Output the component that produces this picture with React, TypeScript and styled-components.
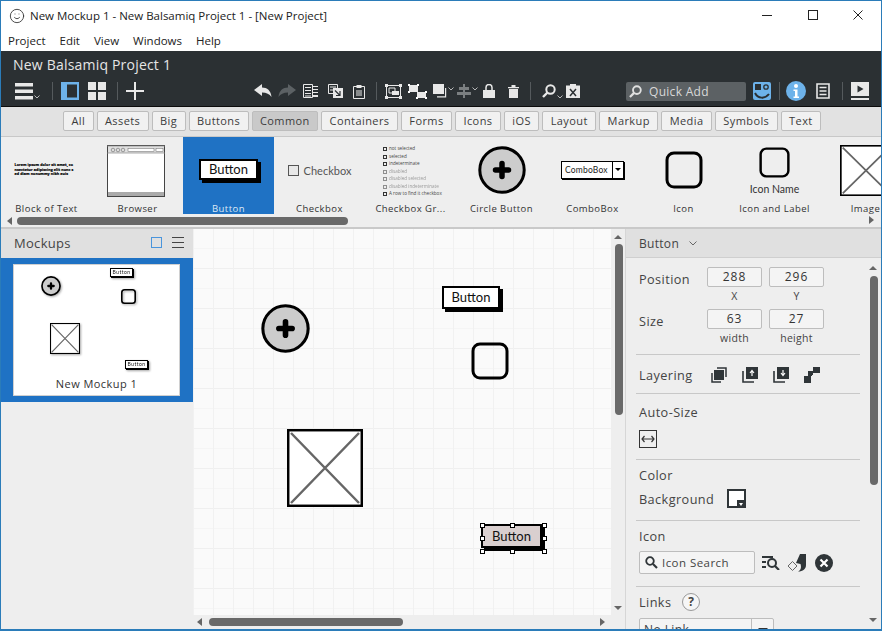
import React from 'react';
import styled, { createGlobalStyle } from 'styled-components';
import { Smile } from 'lucide-react';

const Global = createGlobalStyle`
  html, body { margin: 0; padding: 0; }
  body { font-family: "Open Sans", "Noto Sans", sans-serif; background: #eee; }
  * { box-sizing: border-box; }
`;

const Win = styled.div`
  width: 882px;
  height: 631px;
  border: 1px solid #2b7cb9;
  border-bottom-width: 2px;
  display: flex;
  flex-direction: column;
  overflow: hidden;
  background: #eee;
`;

const TitleBar = styled.div`
  height: 29px;
  flex: none;
  background: #fff;
  display: flex;
  align-items: center;
  padding-left: 8px;
  font-size: 11.5px;
  color: #222;
  gap: 5px;
`;

const WinControls = styled.div`
  margin-left: auto;
  display: flex;
  color: #222;
`;

const WinBtn = styled.div`
  width: 45.5px;
  height: 29px;
  display: flex;
  align-items: center;
  justify-content: center;
  margin-top: -1px;
`;

const MenuBar = styled.div`
  height: 21px;
  flex: none;
  background: #fff;
  display: flex;
  gap: 14px;
  padding-left: 7px;
  font-size: 11.5px;
  color: #222;
  align-items: center;
`;

const Dark = styled.div`
  height: 56px;
  flex: none;
  background: #2b3033;
  color: #e6e6e6;
  border-bottom: 1px solid #0c0c0c;
`;

const ProjectName = styled.div`
  font-size: 14px;
  letter-spacing: 0.2px;
  padding: 4px 0 0 12px;
  height: 25px;
  line-height: 20px;
`;

const Toolbar = styled.div`
  position: relative;
  height: 30px;
  display: flex;
  align-items: center;
`;

const ToolGroup = styled.div<{ $w: number; $gap?: number; $pl?: number }>`
  width: ${p => p.$w}px;
  flex: none;
  display: flex;
  align-items: center;
  gap: ${p => p.$gap ?? 0}px;
  padding-left: ${p => p.$pl ?? 0}px;
  height: 30px;
`;

const Tool = styled.div<{ $ml?: number }>`
  flex: none;
  display: flex;
  align-items: center;
  margin-left: ${p => p.$ml ?? 0}px;
`;

const Sep = styled.div`
  width: 1px;
  height: 18px;
  background: #555a5d;
  flex: none;
`;

const Quick = styled.div`
  width: 120px;
  height: 19px;
  background: #5c6164;
  border-radius: 2px;
  display: flex;
  align-items: center;
  gap: 7px;
  padding-left: 3px;
  font-size: 12px;
  letter-spacing: 0.3px;
  color: #d8d8d8;
  flex: none;
`;

const Filters = styled.div`
  height: 30px;
  flex: none;
  background: #e2e2e2;
  display: flex;
  align-items: center;
  gap: 3px;
  padding: 0 0 1px 62px;
  border-bottom: 1px solid #c8c8c8;
`;

const Filter = styled.div<{ $on?: boolean }>`
  height: 20px;
  padding: 0 7.4px;
  border: 1px solid #bdbdbd;
  border-radius: 2px;
  background: ${p => (p.$on ? '#c9c9c9' : '#f1f1f1')};
  font-size: 11px;
  letter-spacing: 0.42px;
  line-height: 18px;
  color: #3c3c3c;
`;

const Library = styled.div`
  position: relative;
  height: 92px;
  flex: none;
  background: #eee;
  border-bottom: 2px solid #c9c9c9;
  overflow: hidden;
`;

const LibRow = styled.div`
  display: flex;
  height: 77px;
`;

const LibItem = styled.div<{ $on?: boolean }>`
  width: 91px;
  height: 77px;
  flex: none;
  display: flex;
  flex-direction: column;
  align-items: center;
  background: ${p => (p.$on ? '#1f72c4' : 'transparent')};
  color: ${p => (p.$on ? '#dce9f5' : '#333')};
`;

const LibThumb = styled.div`
  height: 66px;
  width: 100%;
  display: flex;
  align-items: center;
  justify-content: center;
`;

const LibLabel = styled.div`
  font-size: 9.5px;
  letter-spacing: 0.45px;
  line-height: 11px;
  white-space: nowrap;
`;

const Nudge = styled.div<{ $mt?: number; $mr?: number; $mb?: number }>`
  margin: ${p => p.$mt ?? 0}px ${p => p.$mr ?? 0}px ${p => p.$mb ?? 0}px 0;
  display: flex;
`;

const HTrack = styled.div`
  height: 14px;
  display: flex;
  align-items: center;
  padding-left: 6px;
`;

const HThumb = styled.div<{ $w: number }>`
  height: 8px;
  width: ${p => p.$w}px;
  border-radius: 4px;
  background: #696969;
  margin-left: 5px;
`;

const ArrowL = styled.div`
  width: 0;
  height: 0;
  border: 4px solid transparent;
  border-left-width: 0;
  border-right: 5px solid #666;
`;

const ArrowR = styled.div<{ $left?: number; $bottom?: number }>`
  position: absolute;
  left: ${p => p.$left ?? 0}px;
  bottom: ${p => p.$bottom ?? 0}px;
  width: 0;
  height: 0;
  border: 4px solid transparent;
  border-right-width: 0;
  border-left: 5px solid #666;
`;

const Main = styled.div`
  flex: 1;
  min-height: 0;
  display: flex;
`;

const Left = styled.div`
  width: 192px;
  flex: none;
  background: #eee;
`;

const PanelHead = styled.div`
  height: 29px;
  background: #e0e0e0;
  display: flex;
  align-items: center;
  font-size: 13px;
  letter-spacing: 0.3px;
  color: #444;
`;

const LeftHead = styled(PanelHead)`
  padding: 0 9px 2px 13px;
  gap: 10px;
`;

const Spacer = styled.div`
  flex: 1;
`;

const BlueBox = styled.div`
  width: 11px;
  height: 11px;
  border: 1px solid #4a95dc;
`;

const Selected = styled.div`
  height: 144px;
  background: #1f72c4;
  padding: 6px 13px 6px 12px;
`;

const Thumb = styled.div`
  position: relative;
  height: 132px;
  background: #fff;
  border: 1px solid #d0d0d0;
  display: flex;
  align-items: flex-end;
  justify-content: center;
  font-size: 11px;
  letter-spacing: 0.45px;
  color: #333;
  padding-bottom: 4px;
`;

const Center = styled.div`
  flex: 1;
  min-width: 0;
  display: flex;
  flex-direction: column;
`;

const CanvasRow = styled.div`
  flex: 1;
  display: flex;
  min-height: 0;
`;

const Canvas = styled.div`
  position: relative;
  flex: 1;
  overflow: hidden;
  background-color: #fafafa;
  background-image:
    linear-gradient(to right, #f1f1f1 1px, transparent 1px),
    linear-gradient(to bottom, #efefef 1px, transparent 1px),
    linear-gradient(to bottom, #f5f5f5 1px, transparent 1px);
  background-size: 20px 20px, 40px 40px, 20px 20px;
  background-position: 0 0, 0 -1px, 0 -1px;
`;

const VTrack = styled.div`
  position: relative;
  width: 14px;
  flex: none;
  background: #eee;
`;

const VThumb = styled.div<{ $top: number; $h: number; $left: number }>`
  position: absolute;
  left: ${p => p.$left}px;
  top: ${p => p.$top}px;
  width: 8px;
  height: ${p => p.$h}px;
  border-radius: 4px;
  background: #696969;
`;

const ArrowU = styled.div<{ $top: number; $left?: number }>`
  position: absolute;
  top: ${p => p.$top}px;
  left: ${p => p.$left ?? 3}px;
  width: 0;
  height: 0;
  border: 4px solid transparent;
  border-top-width: 0;
  border-bottom: 4px solid #666;
`;

const ArrowD = styled.div<{ $top: number; $left?: number }>`
  position: absolute;
  top: ${p => p.$top}px;
  left: ${p => p.$left ?? 3}px;
  width: 0;
  height: 0;
  border: 4px solid transparent;
  border-bottom-width: 0;
  border-top: 4px solid #666;
`;

const CanvasHBar = styled.div`
  position: relative;
  height: 14px;
  flex: none;
  background: #eee;
  display: flex;
  align-items: center;
  padding-left: 4px;
`;

const CanvasHThumb = styled.div`
  width: 194px;
  height: 8px;
  margin-left: 7px;
  background: #696969;
  border-radius: 4px;
`;

const Right = styled.div`
  width: 256px;
  flex: none;
  position: relative;
  background: #eee;
  border-left: 1px solid #d6d6d6;
  overflow: hidden;
`;

const RightHead = styled(PanelHead)`
  padding-left: 13px;
  gap: 10px;
  font-size: 12px;
  border-bottom: 1px solid #cfcfcf;
`;

const Props = styled.div`
  padding: 0 11px 0 10px;
  width: 245px;
  font-size: 12.7px;
  letter-spacing: 0.42px;
  color: #444;
`;

const Section = styled.div<{ $h: number; $pt?: number }>`
  height: ${p => p.$h}px;
  padding: ${p => p.$pt ?? 0}px 0 0 3px;
  border-bottom: 1px solid #c8c8c8;
`;

const LastSection = styled.div`
  padding: 6px 0 0 3px;
`;

const FieldRow = styled.div`
  display: flex;
  align-items: flex-start;
  height: 42px;
`;

const FieldLabel = styled.div`
  width: 68px;
  flex: none;
  line-height: 24px;
`;

const Field = styled.div`
  width: 55px;
  margin-right: 7px;
  text-align: center;
  flex: none;
`;

const NumBox = styled.div`
  height: 20px;
  border: 1px solid #bdbdbd;
  border-radius: 2px;
  background: #f4f4f4;
  font-size: 12px;
  letter-spacing: 1px;
  line-height: 18px;
  color: #333;
`;

const Caption = styled.div`
  font-size: 10.5px;
  line-height: 18px;
  letter-spacing: 0.3px;
`;

const InlineRow = styled.div<{ $gap?: number; $mt?: number }>`
  display: flex;
  align-items: center;
  gap: ${p => p.$gap ?? 0}px;
  margin-top: ${p => p.$mt ?? 0}px;
`;

const Heading = styled.div<{ $w?: number }>`
  line-height: 18px;
  ${p => (p.$w ? `width: ${p.$w}px;` : '')}
`;

const AutoBtn = styled.div`
  width: 18px;
  height: 18px;
  margin-top: 9px;
  border: 1px solid #333;
  display: flex;
  align-items: center;
  justify-content: center;
`;

const Swatch = styled.div`
  position: relative;
  width: 19px;
  height: 19px;
  background: #fff;
  border: 2px solid #2f3538;
`;

const SwatchTab = styled.div`
  position: absolute;
  right: -2px;
  bottom: -2px;
  width: 9px;
  height: 8px;
  background: #2f3538;
  &::after {
    content: '';
    position: absolute;
    left: 2px;
    top: 3px;
    border: 2.5px solid transparent;
    border-bottom-width: 0;
    border-top: 3px solid #fff;
  }
`;

const SearchBox = styled.div`
  width: 116px;
  height: 23px;
  flex: none;
  border: 1px solid #bdbdbd;
  border-radius: 2px;
  background: #f4f4f4;
  display: flex;
  align-items: center;
  gap: 4px;
  padding-left: 5px;
  font-size: 11.5px;
  letter-spacing: 0.45px;
`;

const Help = styled.div`
  width: 18px;
  height: 18px;
  border: 1px solid #999;
  border-radius: 50%;
  background: #f6f6f6;
  font-size: 12px;
  font-weight: 700;
  text-align: center;
  line-height: 16px;
`;

const LinkCombo = styled.div`
  width: 135px;
  height: 24px;
  flex: none;
  border: 1px solid #bdbdbd;
  border-radius: 2px;
  background: #f4f4f4;
  display: flex;
  font-size: 12px;
  padding-left: 4px;
  line-height: 22px;
`;

const ComboArrow = styled.div`
  margin-left: auto;
  width: 22px;
  border-left: 1px solid #bdbdbd;
  position: relative;
  &::after {
    content: '';
    position: absolute;
    left: 6px;
    top: 9px;
    border: 5px solid transparent;
    border-bottom-width: 0;
    border-top: 5px solid #333;
  }
`;

const HideLabel = styled.div`
  margin-left: 51px;
  padding-top: 10px;
`;

const Sketch = styled.div<{ $x: number; $y: number; $w: number; $h: number }>`
  position: absolute;
  left: ${p => p.$x}px;
  top: ${p => p.$y}px;
  width: ${p => p.$w}px;
  height: ${p => p.$h}px;
`;

const MiniSketch = styled(Sketch)`
  filter: drop-shadow(1px 1px 1px rgba(0, 0, 0, 0.35));
`;

const ButtonShape = styled.div<{ $fs: number; $sel?: boolean; $w: number; $h: number; $sh: number; $bw: number }>`
  width: ${p => p.$w}px;
  height: ${p => p.$h}px;
  background: ${p => (p.$sel ? '#d9cfcf' : '#fff')};
  border: ${p => p.$bw}px solid #000;
  box-shadow: ${p => p.$sh}px ${p => p.$sh}px 0 #000;
  font-family: "Lato", "Open Sans", sans-serif;
  font-size: ${p => p.$fs}px;
  color: #111;
  display: flex;
  align-items: center;
  justify-content: center;
  line-height: 1;
`;

const Handle = styled.div<{ $x: number; $y: number }>`
  position: absolute;
  left: ${p => p.$x}px;
  top: ${p => p.$y}px;
  width: 5px;
  height: 5px;
  background: #fff;
  border: 1px solid #000;
`;

const ComboShape = styled.div`
  width: 63px;
  height: 18px;
  border: 1px solid #000;
  box-shadow: 1px 1px 0 #000;
  background: #fff;
  display: flex;
  font-size: 8.5px;
  line-height: 16px;
  font-family: "Lato", sans-serif;
  color: #222;
  padding-left: 3px;
  letter-spacing: 0.2px;
`;

const ComboDrop = styled.div`
  width: 11px;
  margin-left: auto;
  border-left: 1px solid #000;
  position: relative;
  &::after {
    content: '';
    position: absolute;
    left: 2px;
    top: 6px;
    border: 3px solid transparent;
    border-bottom-width: 0;
    border-top: 3px solid #000;
  }
`;

const CheckSq = styled.div`
  width: 11px;
  height: 11px;
  border: 1px solid #555;
  background: #e8e8e8;
`;

const CheckText = styled.div`
  font-size: 11px;
  font-family: "Lato", sans-serif;
  color: #555;
`;

const CheckLine = styled.div`
  display: flex;
  gap: 5px;
  align-items: center;
`;

const IconName = styled.div`
  font-size: 10.5px;
  font-family: "Lato", sans-serif;
  color: #333;
  margin-top: 6px;
  line-height: 10px;
`;

const Stack = styled.div`
  display: flex;
  flex-direction: column;
  align-items: center;
`;

const MiniList = styled.div`
  display: flex;
  flex-direction: column;
  width: 55px;
  font-size: 4.6px;
  line-height: 7.5px;
  color: #444;
  margin-top: 3px;
`;

const MiniRow = styled.div<{ $dim?: boolean }>`
  display: flex;
  align-items: center;
  gap: 2px;
  white-space: nowrap;
  opacity: ${p => (p.$dim ? 0.5 : 1)};
`;

const MiniBox = styled.div`
  width: 4px;
  height: 4px;
  border: 0.5px solid #333;
  flex: none;
`;

const TextBlock = styled.div`
  width: 60px;
  margin-right: 4px;
  font-size: 3.6px;
  font-weight: 700;
  line-height: 4.4px;
  letter-spacing: 0.1px;
  color: #000;
  -webkit-text-stroke: 0.2px #000;
  word-break: break-all;
`;

// sketch drawings

const CircleBtn = ({ size, stroke = 3 }: { size: number; stroke?: number }) => (
  <svg width={size} height={size} viewBox="0 0 48 48">
    <circle cx="24" cy="24" r={24 - stroke / 2 - 0.3} fill="#ccc" stroke="#000" strokeWidth={stroke} />
    <path d="M24 17.500v13M17.500 24h13" stroke="#000" strokeWidth="5.500" strokeLinecap="round" />
  </svg>
);

const RoundSq = ({ size, stroke = 3 }: { size: number; stroke?: number }) => (
  <svg width={size} height={size} viewBox="0 0 38 38">
    <rect x="2" y="2" width="34" height="34" rx="7" fill="none" stroke="#000" strokeWidth={stroke} />
  </svg>
);

const ImageBox = ({ w, h, stroke = 2.5 }: { w: number; h: number; stroke?: number }) => (
  <svg width={w} height={h} viewBox="0 0 76 78" preserveAspectRatio="none">
    <rect x="1.200" y="1.200" width="73.600" height="75.600" fill="#fff" stroke="#000" strokeWidth={stroke} />
    <path d="M4 4l68 70M72 4L4 74" stroke="#666" strokeWidth={stroke} />
  </svg>
);

const BrowserThumb = () => (
  <svg width="58" height="52" viewBox="0 0 58 52">
    <rect x="0.500" y="0.500" width="57" height="51" fill="#fff" stroke="#444" />
    <rect x="1" y="1" width="56" height="7" fill="#e0e0e0" />
    <path d="M0 1h58M0 8h58" stroke="#888" strokeWidth="0.700" />
    <circle cx="6" cy="5" r="1.800" fill="#ddd" stroke="#555" strokeWidth="0.500" />
    <circle cx="11" cy="5" r="1.800" fill="#ddd" stroke="#555" strokeWidth="0.500" />
    <circle cx="16" cy="5" r="1.800" fill="#ddd" stroke="#555" strokeWidth="0.500" />
    <rect x="21" y="3.500" width="26" height="3" fill="#fff" stroke="#666" strokeWidth="0.500" />
    <rect x="49" y="3.500" width="7" height="3" fill="#fff" stroke="#666" strokeWidth="0.500" />
    <rect x="1" y="47" width="56" height="4" fill="#aaa" />
  </svg>
);

// toolbar icons, white on dark

const Ic = ({ w = 16, h = 16, children, fill = '#e8e8e8' }: { w?: number; h?: number; children: React.ReactNode; fill?: string }) => (
  <svg width={w} height={h} viewBox={`0 0 ${w} ${h}`} fill={fill} style={{ flex: 'none' }}>
    {children}
  </svg>
);

const Caret = () => (
  <svg width="6" height="4" viewBox="0 0 6 4" style={{ flex: 'none', alignSelf: 'flex-end', marginBottom: 7, marginLeft: 1 }}>
    <path d="M0.500 0.500L3 3l2.500-2.500" fill="none" stroke="#ddd" strokeWidth="0.800" />
  </svg>
);

const Undo = ({ fill }: { fill: string }) => (
  <Ic w={18} h={14} fill={fill}>
    <path d="M0 6L8 0v3.500c5 0 9 3 9.500 9.500C15.500 10 12.500 8.500 8 8.500V12z" />
  </Ic>
);

const Redo = ({ fill }: { fill: string }) => (
  <Ic w={18} h={14} fill={fill}>
    <path d="M18 6L10 0v3.500C5 3.500 1 6.500.5 13 2.500 10 5.500 8.500 10 8.500V12z" />
  </Ic>
);

const Lines = () => (
  <Ic w={15} h={14}>
    <path d="M.5.5h9v13h-9z" fillOpacity="0" stroke="#e8e8e8" />
    <path d="M2 3.500h6M2 6.500h6M2 9.500h6M2 12h6" stroke="#e8e8e8" />
    <path d="M10 2h5v1h-5zM10 5h5v1h-5zM10 8h5v1h-5zM10 11h5v2h-5z" />
  </Ic>
);

const PasteSpec = () => (
  <Ic w={15} h={14}>
    <path d="M.5.5h9v9h-9z" fillOpacity="0" stroke="#e8e8e8" />
    <path d="M2 3h6M2 6h3" stroke="#e8e8e8" />
    <path d="M5 4h10v10H5z" />
    <path d="M7 6.500l5 5M12 7v4.500H8" stroke="#2b3033" fill="none" strokeWidth="1.200" />
  </Ic>
);

const Clip = () => (
  <Ic w={12} h={15}>
    <path d="M.5 2.500h11v12H.5z" fillOpacity="0" stroke="#e8e8e8" />
    <path d="M3.500 1h5v3h-5z" />
    <path d="M3 7h6M3 9h6M3 11h6" stroke="#e8e8e8" />
  </Ic>
);

const Group = () => (
  <Ic w={17} h={15}>
    <path d="M1.500 1.500h14v12h-14z" fillOpacity="0" stroke="#e8e8e8" />
    <path d="M0 0h3v3H0zM14 0h3v3h-3zM0 12h3v3H0zM14 12h3v3h-3z" />
    <path d="M4 4h6v5H4z" fillOpacity="0" stroke="#e8e8e8" />
    <path d="M7 7h7v4H7z" />
  </Ic>
);

const Ungroup = () => (
  <Ic w={19} h={15}>
    <path d="M1 1h9v7H1z" />
    <path d="M9 8h9v6H9z" />
    <path d="M0 0h2v2H0zM9 0h2v2H9zM0 7h2v2H0zM17 13h2v2h-2zM8 13h2v2H8zM17 7h2v2h-2z" fill="#fff" />
  </Ic>
);

const ArrangeIc = () => (
  <Ic w={14} h={14}>
    <path d="M0 0h11v10H0z" />
    <path d="M12 4h1.200v9.500H4v-1.200h8z" />
  </Ic>
);

const AlignIc = () => (
  <Ic w={14} h={14} fill="#7b7f81">
    <path d="M6 0h2v14H6z" />
    <path d="M2 3h10v3H2zM0 8h14v3H0z" />
  </Ic>
);

const Lock = () => (
  <Ic w={12} h={14}>
    <path d="M0 6h12v8H0z" />
    <path d="M3 6V3.500a3 3 0 0 1 6 0V6" fill="none" stroke="#e8e8e8" strokeWidth="1.500" />
  </Ic>
);

const Trash = () => (
  <Ic w={11} h={13}>
    <path d="M1 4h9v9H1zM0 2h11v1.300H0zM3.500 0h4v2h-4z" />
  </Ic>
);

const Mag = ({ size = 14, fill = '#e8e8e8' }: { size?: number; fill?: string }) => (
  <svg width={size} height={size} viewBox="0 0 14 14" style={{ flex: 'none' }}>
    <circle cx="8.500" cy="5.500" r="4.200" fill="none" stroke={fill} strokeWidth="2" />
    <path d="M5.500 8.500L1 13" stroke={fill} strokeWidth="2.400" />
  </svg>
);

const ClipX = () => (
  <Ic w={14} h={14}>
    <path d="M0 1.500h14V14H0z" />
    <path d="M4 0h6v3H4z" />
    <path d="M4 5l6 7M10 5l-6 7" stroke="#2b3033" strokeWidth="1.500" />
  </Ic>
);

const Face = () => (
  <svg width="18" height="18" viewBox="0 0 18 18" style={{ flex: 'none' }}>
    <rect width="18" height="18" rx="2" fill="#6db2ea" />
    <rect x="2" y="2" width="6" height="6" fill="#2b3033" />
    <circle cx="13" cy="5" r="2.200" fill="none" stroke="#2b3033" strokeWidth="1.300" />
    <path d="M2 11c3 6 10 6 14 1" fill="none" stroke="#2b3033" strokeWidth="2" />
  </svg>
);

const Info = () => (
  <svg width="20" height="20" viewBox="0 0 20 20" style={{ flex: 'none' }}>
    <circle cx="10" cy="10" r="10" fill="#6db2ea" />
    <circle cx="10" cy="5" r="2" fill="#fff" />
    <path d="M7.500 8.500h4v7H13V17H7.500v-1.500H9V10H7.500z" fill="#fff" />
  </svg>
);

const ListBox = () => (
  <Ic w={14} h={16}>
    <path d="M1 1h12v14H1z" fillOpacity="0" stroke="#e8e8e8" strokeWidth="1.600" />
    <path d="M3.500 4.500h7M3.500 8h7M3.500 11.500h7" stroke="#e8e8e8" strokeWidth="1.500" />
  </Ic>
);

const Play = () => (
  <Ic w={18} h={18}>
    <path d="M0 0h18v14H0z" />
    <path d="M6.500 3.500l6 3.500-6 3.500z" fill="#2b3033" />
    <path d="M0 16h18v2H0z" />
  </Ic>
);

// layering icons in the inspector

const D = '#2f3538';

const LayerFront = () => (
  <svg width="16" height="16" viewBox="0 0 16 16">
    <path d="M3 3h10v10H3z" fill={D} />
    <path d="M6 1h9v9" fill="none" stroke={D} strokeWidth="1.500" />
    <path d="M1 6v9h9" fill="none" stroke={D} strokeWidth="1.500" />
  </svg>
);

const LayerMove = ({ up }: { up: boolean }) => (
  <svg width="16" height="16" viewBox="0 0 16 16">
    <path d="M4 0h12v12H4z" fill={D} />
    <path d="M1 4v11h11" fill="none" stroke={D} strokeWidth="1.600" />
    <path d={up ? 'M10 9V4M8 6l2-2.500L12 6' : 'M10 3v5M8 6l2 2.500L12 6'} fill="none" stroke="#fff" strokeWidth="1.200" />
  </svg>
);

const LayerBack = () => (
  <svg width="16" height="16" viewBox="0 0 16 16">
    <path d="M0 9h7v7H0zM9 0h7v6H9z" fill={D} />
    <path d="M4 4h8v1H9v3H8v1H4z" fill={D} />
  </svg>
);

const IconList = () => (
  <svg width="18" height="15" viewBox="0 0 18 15">
    <path d="M0 1h11v2H0zM0 6h4v2H0zM0 11h4v2H0z" fill={D} />
    <circle cx="10" cy="8" r="4" fill="none" stroke={D} strokeWidth="2" />
    <path d="M13 11l4 4" stroke={D} strokeWidth="2.200" />
  </svg>
);

const IconSwap = () => (
  <svg width="19" height="18" viewBox="0 0 19 18">
    <path d="M1 12l4.500-4.500L10 12l-4.500 4.500z" fill="none" stroke="#666" />
    <path d="M13 0l6 0v11c0 4-3 6.500-8 6.500 3-1 3.500-4.500 2.500-7.500L9 9z" fill={D} />
  </svg>
);

const IconClear = () => (
  <svg width="18" height="18" viewBox="0 0 18 18" style={{ marginLeft: 2 }}>
    <circle cx="9" cy="9" r="9" fill={D} />
    <path d="M5.500 5.500l7 7M12.500 5.500l-7 7" stroke="#fff" strokeWidth="2.200" />
  </svg>
);

const FILTERS = ['All', 'Assets', 'Big', 'Buttons', 'Common', 'Containers', 'Forms', 'Icons', 'iOS', 'Layout', 'Markup', 'Media', 'Symbols', 'Text'];
const GROUP_ROWS = ['not selected', 'selected', 'indeterminate', 'disabled', 'disabled selected', 'disabled indeterminate', 'A row to find it checkbox'];

const App = () => {
  return (
    <Win>
      <Global />
      <TitleBar>
        <Smile size={16} strokeWidth={1.3} color="#333" />
        New Mockup 1 - New Balsamiq Project 1 - [New Project]
        <WinControls>
          <WinBtn>
            <svg width="10" height="10" viewBox="0 0 10 10"><path d="M0 5.500h10" stroke="#222" /></svg>
          </WinBtn>
          <WinBtn>
            <svg width="10" height="10" viewBox="0 0 10 10"><rect x=".5" y=".5" width="9" height="9" fill="none" stroke="#222" /></svg>
          </WinBtn>
          <WinBtn>
            <svg width="10" height="10" viewBox="0 0 10 10"><path d="M.5.500l9 9M9.500.500l-9 9" stroke="#222" /></svg>
          </WinBtn>
        </WinControls>
      </TitleBar>
      <MenuBar>
        <span>Project</span>
        <span>Edit</span>
        <span>View</span>
        <span>Windows</span>
        <span>Help</span>
      </MenuBar>

      <Dark>
        <ProjectName>New Balsamiq Project 1</ProjectName>
        <Toolbar>
          <ToolGroup $w={51} $pl={14}>
            <Ic w={18} h={17}><path d="M0 0h18v3.500H0zM0 6.500h18V10H0zM0 13h18v3.500H0z" /></Ic>
            <Caret />
          </ToolGroup>
          <Sep />
          <ToolGroup $w={64} $gap={9} $pl={8}>
            <Ic w={18} h={18} fill="#6db2ea"><path d="M0 0h18v18H0z" /><path d="M6 2.500h10v13H6z" fill="#2b3033" /></Ic>
            <Ic w={18} h={18}><path d="M0 0h8v8H0zM10 0h8v8h-8zM0 10h8v8H0zM10 10h8v8h-8z" /></Ic>
          </ToolGroup>
          <Sep />
          <ToolGroup $w={136} $pl={8}>
            <Ic w={18} h={18}><path d="M8 0h2v8h8v2h-8v8H8v-8H0V8h8z" /></Ic>
          </ToolGroup>
          <ToolGroup $w={122}>
            <Undo fill="#e8e8e8" />
            <Tool $ml={6}><Redo fill="#5c6164" /></Tool>
            <Tool $ml={7}><Lines /></Tool>
            <Tool $ml={10}><PasteSpec /></Tool>
            <Tool $ml={10}><Clip /></Tool>
          </ToolGroup>
          <Sep />
          <ToolGroup $w={153} $pl={8}>
            <Group />
            <Tool $ml={6}><Ungroup /></Tool>
            <Tool $ml={6}><ArrangeIc /><Caret /></Tool>
            <Tool $ml={3}><AlignIc /><Caret /></Tool>
            <Tool $ml={5}><Lock /></Tool>
            <Tool $ml={13}><Trash /></Tool>
          </ToolGroup>
          <Sep />
          <ToolGroup $w={95} $pl={11}>
            <Mag />
            <Caret />
            <Tool $ml={3}><ClipX /></Tool>
          </ToolGroup>
          <Quick>
            <Mag size={13} fill="#e0e0e0" />
            Quick Add
          </Quick>
          <ToolGroup $w={33} $pl={7}>
            <Face />
          </ToolGroup>
          <Sep />
          <ToolGroup $w={62} $gap={10} $pl={6}>
            <Info />
            <ListBox />
          </ToolGroup>
          <Sep />
          <ToolGroup $w={30} $pl={8}>
            <Play />
          </ToolGroup>
        </Toolbar>
      </Dark>

      <Filters>
        {FILTERS.map(f => (
          <Filter key={f} $on={f === 'Common'}>{f}</Filter>
        ))}
      </Filters>

      <Library>
        <LibRow>
          <LibItem>
            <LibThumb>
              <TextBlock>Lorem ipsum dolor sit amet, consectetur adipiscing elit nunc sed diam nonummy nibh euis</TextBlock>
            </LibThumb>
            <LibLabel>Block of Text</LibLabel>
          </LibItem>
          <LibItem>
            <LibThumb><Nudge $mt={2} $mr={3}><BrowserThumb /></Nudge></LibThumb>
            <LibLabel>Browser</LibLabel>
          </LibItem>
          <LibItem $on>
            <LibThumb>
              <Nudge $mb={2}>
                <ButtonShape $fs={13} $w={59} $h={21} $sh={3} $bw={2}>Button</ButtonShape>
              </Nudge>
            </LibThumb>
            <LibLabel>Button</LibLabel>
          </LibItem>
          <LibItem>
            <LibThumb>
              <CheckLine>
                <CheckSq />
                <CheckText>Checkbox</CheckText>
              </CheckLine>
            </LibThumb>
            <LibLabel>Checkbox</LibLabel>
          </LibItem>
          <LibItem>
            <LibThumb>
              <MiniList>
                {GROUP_ROWS.map((r, i) => (
                  <MiniRow key={r} $dim={i > 2 && i < 6}>
                    <MiniBox />
                    {r}
                  </MiniRow>
                ))}
              </MiniList>
            </LibThumb>
            <LibLabel>Checkbox Gr...</LibLabel>
          </LibItem>
          <LibItem>
            <LibThumb><CircleBtn size={48} /></LibThumb>
            <LibLabel>Circle Button</LibLabel>
          </LibItem>
          <LibItem>
            <LibThumb>
              <ComboShape>
                ComboBox
                <ComboDrop />
              </ComboShape>
            </LibThumb>
            <LibLabel>ComboBox</LibLabel>
          </LibItem>
          <LibItem>
            <LibThumb><RoundSq size={38} /></LibThumb>
            <LibLabel>Icon</LibLabel>
          </LibItem>
          <LibItem>
            <LibThumb>
              <Stack>
                <RoundSq size={31} />
                <IconName>Icon Name</IconName>
              </Stack>
            </LibThumb>
            <LibLabel>Icon and Label</LibLabel>
          </LibItem>
          <LibItem>
            <LibThumb><ImageBox w={52} h={51} /></LibThumb>
            <LibLabel>Image</LibLabel>
          </LibItem>
        </LibRow>
        <HTrack>
          <ArrowL />
          <HThumb $w={331} />
        </HTrack>
        <ArrowR $left={868} $bottom={3} />
      </Library>

      <Main>
        <Left>
          <LeftHead>
            Mockups
            <Spacer />
            <BlueBox />
            <Ic w={12} h={11} fill="#444"><path d="M0 0h12v1H0zM0 5h12v1H0zM0 10h12v1H0z" /></Ic>
          </LeftHead>
          <Selected>
            <Thumb>
              <MiniSketch $x={27} $y={11} $w={20} $h={20}><CircleBtn size={20} stroke={4} /></MiniSketch>
              <MiniSketch $x={96} $y={3} $w={24} $h={10}>
                <ButtonShape $fs={5} $w={23} $h={9} $sh={1} $bw={1}>Button</ButtonShape>
              </MiniSketch>
              <MiniSketch $x={107} $y={24} $w={16} $h={16}><RoundSq size={15} stroke={4} /></MiniSketch>
              <MiniSketch $x={36} $y={58} $w={31} $h={32}><ImageBox w={30} h={31} stroke={3} /></MiniSketch>
              <MiniSketch $x={111} $y={95} $w={24} $h={10}>
                <ButtonShape $fs={5} $w={23} $h={9} $sh={1} $bw={1}>Button</ButtonShape>
              </MiniSketch>
              New Mockup 1
            </Thumb>
          </Selected>
        </Left>

        <Center>
          <CanvasRow>
            <Canvas>
              <Sketch $x={68} $y={75} $w={49} $h={49}><CircleBtn size={49} /></Sketch>
              <Sketch $x={249} $y={57} $w={61} $h={25}>
                <ButtonShape $fs={13} $w={58} $h={23} $sh={3} $bw={2}>Button</ButtonShape>
              </Sketch>
              <Sketch $x={278} $y={113} $w={38} $h={38}><RoundSq size={38} /></Sketch>
              <Sketch $x={94} $y={200} $w={76} $h={78}><ImageBox w={76} h={78} /></Sketch>
              <Sketch $x={288} $y={295} $w={64} $h={27}>
                <ButtonShape $fs={13} $sel $w={61} $h={24} $sh={3} $bw={2}>Button</ButtonShape>
                <Handle $x={-1} $y={-1} />
                <Handle $x={29} $y={-1} />
                <Handle $x={61} $y={-1} />
                <Handle $x={-1} $y={12} />
                <Handle $x={61} $y={12} />
                <Handle $x={-1} $y={25} />
                <Handle $x={29} $y={25} />
                <Handle $x={61} $y={25} />
              </Sketch>
            </Canvas>
            <VTrack>
              <ArrowU $top={6} />
              <VThumb $left={4} $top={15} $h={171} />
              <ArrowD $top={377} />
            </VTrack>
          </CanvasRow>
          <CanvasHBar>
            <ArrowL />
            <CanvasHThumb />
            <ArrowR $left={407} $bottom={3} />
          </CanvasHBar>
        </Center>

        <Right>
          <RightHead>
            Button
            <svg width="8" height="5" viewBox="0 0 8 5"><path d="M.5.500L4 4l3.500-3.500" fill="none" stroke="#666" /></svg>
          </RightHead>
          <Props>
            <Section $h={97} $pt={9}>
              <FieldRow>
                <FieldLabel>Position</FieldLabel>
                <Field>
                  <NumBox>288</NumBox>
                  <Caption>X</Caption>
                </Field>
                <Field>
                  <NumBox>296</NumBox>
                  <Caption>Y</Caption>
                </Field>
              </FieldRow>
              <FieldRow>
                <FieldLabel>Size</FieldLabel>
                <Field>
                  <NumBox>63</NumBox>
                  <Caption>width</Caption>
                </Field>
                <Field>
                  <NumBox>27</NumBox>
                  <Caption>height</Caption>
                </Field>
              </FieldRow>
            </Section>
            <Section $h={39} $pt={11}>
              <InlineRow $gap={15}>
                <Heading $w={57}>Layering</Heading>
                <LayerFront />
                <LayerMove up />
                <LayerMove up={false} />
                <LayerBack />
              </InlineRow>
            </Section>
            <Section $h={66} $pt={9}>
              <Heading>Auto-Size</Heading>
              <AutoBtn>
                <svg width="14" height="8" viewBox="0 0 14 8"><path d="M1 4h12M3.500 1L1 4l2.500 3M10.500 1L13 4l-2.500 3" fill="none" stroke="#333" strokeWidth="1.200" /></svg>
              </AutoBtn>
            </Section>
            <Section $h={61} $pt={6}>
              <Heading>Color</Heading>
              <InlineRow $gap={13} $mt={5}>
                <Heading>Background</Heading>
                <Swatch><SwatchTab /></Swatch>
              </InlineRow>
            </Section>
            <Section $h={66} $pt={6}>
              <Heading>Icon</Heading>
              <InlineRow $gap={7} $mt={6}>
                <SearchBox>
                  <svg width="13" height="13" viewBox="0 0 13 13"><circle cx="5" cy="5" r="3.800" fill="none" stroke={D} strokeWidth="1.800" /><path d="M8 8l4 4" stroke={D} strokeWidth="2.200" /></svg>
                  Icon Search
                </SearchBox>
                <IconList />
                <IconSwap />
                <IconClear />
              </InlineRow>
            </Section>
            <LastSection>
              <InlineRow $gap={11}>
                <Heading>Links</Heading>
                <Help>?</Help>
              </InlineRow>
              <InlineRow $mt={5}>
                <LinkCombo>No Link<ComboArrow /></LinkCombo>
                <HideLabel>Hide</HideLabel>
              </InlineRow>
            </LastSection>
          </Props>
          <ArrowU $top={37} $left={243} />
          <VThumb $left={244} $top={47} $h={209} />
          <ArrowD $top={389} $left={243} />
        </Right>
      </Main>
    </Win>
  );
};

export default App;
